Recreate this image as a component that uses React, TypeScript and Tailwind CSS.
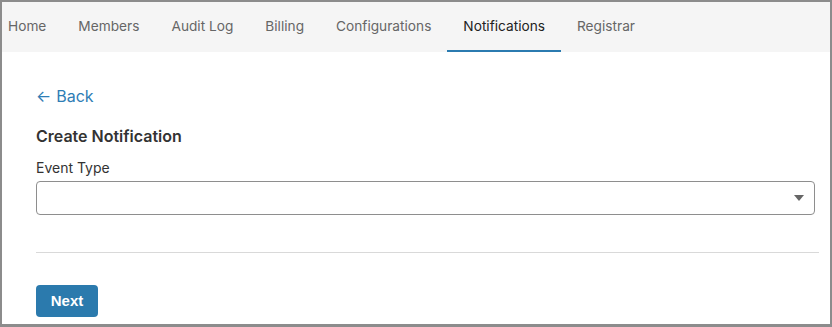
const tabs = ['Home', 'Members', 'Audit Log', 'Billing', 'Configurations', 'Notifications', 'Registrar'];

export default function App() {
  return (
    <div
      className="h-[327px] w-[832px] overflow-hidden border-2 border-b-[3px] border-[#8c8c8c] bg-white text-[#333]"
      style={{ fontFamily: 'Inter, "Noto Sans", sans-serif' }}
    >
      {/* Tabs */}
      <nav className="flex h-[50px] bg-[#f5f5f5] pl-[6px] -ml-[16px]">
        {tabs.map((tab) => {
          const active = tab === 'Notifications';
          return (
            <div
              key={tab}
              className={
                active
                  ? 'flex items-center px-4 text-[13.7px] text-[#222] border-b-2 border-[#2b7bb0]'
                  : 'flex items-center px-4 text-[13.7px] text-[#666] border-b-2 border-transparent'
              }
            >
              {tab}
            </div>
          );
        })}
      </nav>

      {/* Content */}
      <div className="pl-[34px] pt-[32px]">
        <a className="flex h-6 items-center text-[16px] text-[#2e7db5]">
          <span className="mr-[5px]">←</span>Back
        </a>
        <h2 className="mt-4 flex h-6 items-center text-[16px] font-semibold text-[#333]">Create Notification</h2>
        <label className="mt-[9px] flex h-5 items-center text-[14px] text-[#333]">Event Type</label>
        <div className="mt-1 flex h-[34px] w-[779px] items-center justify-end rounded-[4px] border border-[#8e8e8e] pr-[10px]">
          <svg width="10" height="6" viewBox="0 0 10 6">
            <path d="M0 0h10L5 6z" fill="#666" />
          </svg>
        </div>
        <div className="mt-[37px] h-px w-[783px] bg-[#d9d9d9]" />
        <button
          className="mt-[32px] h-8 w-[62px] rounded-[4px] bg-[#2b7aad] text-[15px] font-bold text-white"
          style={{ fontFamily: '"Liberation Sans", Arial, sans-serif' }}
        >
          Next
        </button>
      </div>
    </div>
  );
}
